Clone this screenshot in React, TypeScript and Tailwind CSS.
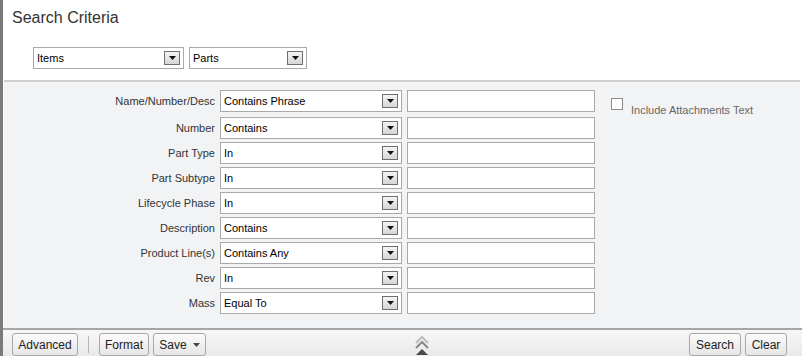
import React from 'react';

const rows: { label: string; op: string }[] = [
  { label: 'Name/Number/Desc', op: 'Contains Phrase' },
  { label: 'Number', op: 'Contains' },
  { label: 'Part Type', op: 'In' },
  { label: 'Part Subtype', op: 'In' },
  { label: 'Lifecycle Phase', op: 'In' },
  { label: 'Description', op: 'Contains' },
  { label: 'Product Line(s)', op: 'Contains Any' },
  { label: 'Rev', op: 'In' },
  { label: 'Mass', op: 'Equal To' },
];

const Arrow: React.FC = () => (
  <span className="flex h-[14px] w-[16px] shrink-0 items-center justify-center border border-[#6f6f6f] bg-gradient-to-b from-[#f4f4f4] to-[#d6d6d6]">
    <svg width="7" height="4" viewBox="0 0 7 4"><path d="M0 0h7L3.5 4z" fill="#111" /></svg>
  </span>
);

const Select: React.FC<{ value: string; w: string }> = ({ value, w }) => (
  <div className={`flex h-[22px] ${w} items-center justify-between border border-[#a9a9a9] bg-white pl-[3px] pr-[3px]`}>
    <span className="text-[11px] text-black">{value}</span>
    <Arrow />
  </div>
);

const Btn: React.FC<{ children: React.ReactNode; w: string }> = ({ children, w }) => (
  <button className={`flex h-[23px] ${w} items-center justify-center gap-[6px] rounded-[3px] border border-[#a8a8a8] bg-gradient-to-b from-[#fbfbfb] to-[#e6e6e6] text-[12px] text-[#222]`}>
    {children}
  </button>
);

export default function App() {
  return (
    <div className="flex h-[356px] w-[802px] overflow-hidden bg-white font-['Liberation_Sans',Arial,sans-serif]">
      <div className="w-[3px] shrink-0 bg-[#7a7a7a]" />
      <div className="flex min-w-0 flex-1 flex-col">
        <div className="pl-[9px] pt-[8px] text-[16px] leading-[20px] text-[#333]">Search Criteria</div>
        <div className="mt-[19px] flex gap-[5px] pl-[30px]">
          <Select value="Items" w="w-[151px]" />
          <Select value="Parts" w="w-[118px]" />
        </div>
        <div className="ml-[1px] mr-[2px] mt-[11px] flex-1 border-t-2 border-[#cfcfcf] bg-[#f2f3f5]">
          <div className="flex pt-[8px]">
            <div className="flex flex-col">
              {rows.map((r, i) => (
                <div key={r.label} className={`flex items-center ${i === 0 ? 'mb-[5px]' : 'mb-[3px]'}`}>
                  <div className="w-[216px] pr-[5px] text-right text-[11px] text-[#333]">{r.label}</div>
                  <Select value={r.op} w="w-[182px]" />
                  <div className="ml-[5px] h-[22px] w-[188px] border border-[#a9a9a9] bg-white" />
                </div>
              ))}
            </div>
            <div className="ml-[16px] mt-[8px] flex items-start gap-[8px]">
              <span className="h-[12px] w-[12px] border border-[#8e8e8e] bg-white" />
              <span className="mt-[4px] text-[11px] text-[#666]">Include Attachments Text</span>
            </div>
          </div>
        </div>
        <div className="flex h-[28px] shrink-0 items-start border-t-2 border-[#a6a6a6] bg-gradient-to-b from-[#f7f7f7] to-[#e9e9e9] pl-[9px] pr-[15px] pt-[3px]">
          <Btn w="w-[66px]">Advanced</Btn>
          <span className="ml-[10px] mr-[10px] mt-[3px] h-[17px] w-px bg-[#b5b5b5]" />
          <Btn w="w-[50px]">Format</Btn>
          <span className="w-[4px]" />
          <Btn w="w-[53px]">
            Save
            <svg width="7" height="4" viewBox="0 0 7 4"><path d="M0 0h7L3.5 4z" fill="#444" /></svg>
          </Btn>
          <div className="flex flex-1 justify-center pt-[2px] pr-[52px]">
            <svg width="14" height="22" viewBox="0 0 14 22">
              <path d="M1 8l6-6 6 6" fill="none" stroke="#bdbdbd" strokeWidth="2" />
              <path d="M1 13l6-6 6 6" fill="none" stroke="#8a8a8a" strokeWidth="2" />
              <path d="M1 20l6-6 6 6z" fill="#4a4a4a" />
            </svg>
          </div>
          <Btn w="w-[52px]">Search</Btn>
          <span className="w-[4px]" />
          <Btn w="w-[42px]">Clear</Btn>
        </div>
      </div>
    </div>
  );
}
